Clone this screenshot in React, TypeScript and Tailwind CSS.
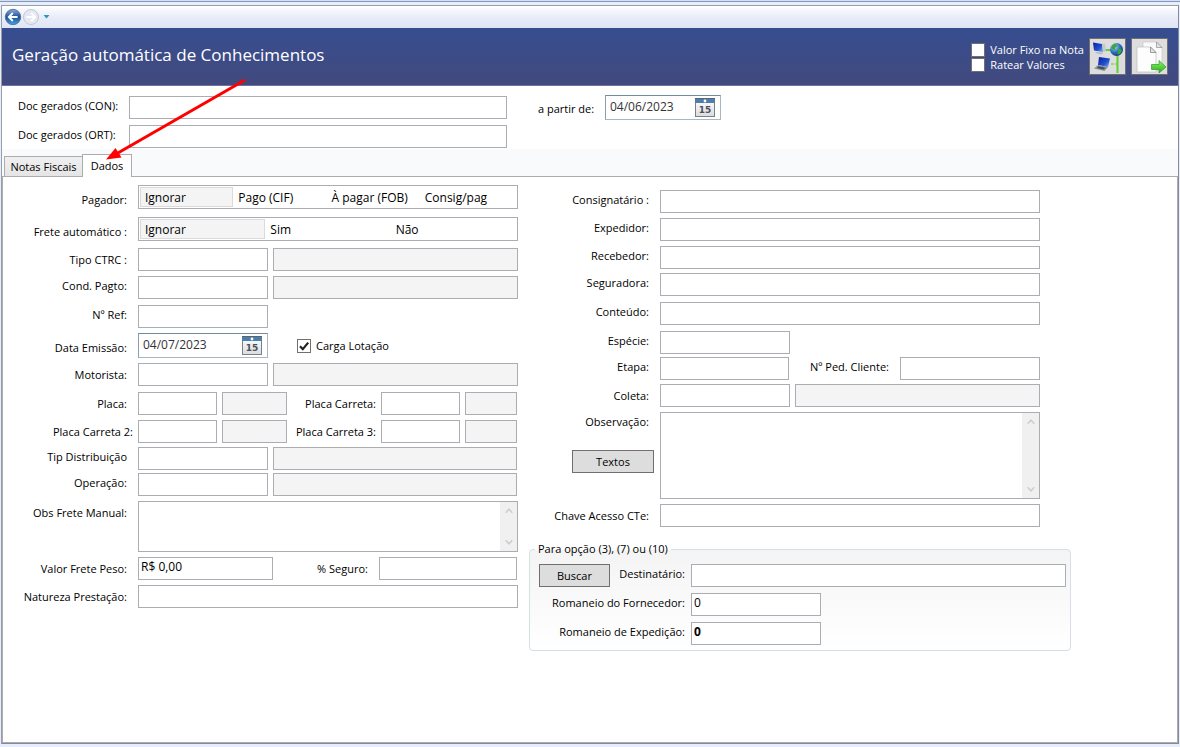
import { useId, type ReactNode } from 'react';
import { clsx } from 'clsx';

const FIELD = 'h-[23px] border border-[#abadb3] px-[2px] pb-[4px] text-xs leading-4 text-black outline-none';

interface FieldProps {
  id?: string;
  label?: string;
  className?: string;
  value?: string;
  readOnly?: boolean;
}

const Field = ({ id, label, className, value, readOnly }: FieldProps) => (
  <input
    id={id}
    type="text"
    aria-label={label}
    defaultValue={value}
    readOnly={readOnly}
    className={clsx(FIELD, readOnly ? 'bg-[#f4f4f4]' : 'bg-white', className)}
  />
);

interface RowProps {
  label: string;
  htmlFor?: string;
  className?: string;
  labelClass?: string;
  children: ReactNode;
}

/* Left column row: label right aligned against the fields */
const Row = ({ label, htmlFor, className, labelClass = 'pt-1', children }: RowProps) => (
  <div className={clsx('flex items-start', className)}>
    <label
      htmlFor={htmlFor}
      className={clsx('mr-[11px] w-[124px] shrink-0 whitespace-nowrap text-right', labelClass)}
    >
      {label}
    </label>
    <div className="flex min-w-0 flex-1 items-start gap-[5px]">{children}</div>
  </div>
);

/* Right column row */
const SideRow = ({ label, htmlFor, className, labelClass = 'pt-0.5', children }: RowProps) => (
  <div className={clsx('flex items-start pr-[31px]', className)}>
    <label
      htmlFor={htmlFor}
      className={clsx('mr-[11px] w-[120px] shrink-0 whitespace-nowrap text-right', labelClass)}
    >
      {label}
    </label>
    <div className="flex min-w-0 flex-1 items-start gap-[5px]">{children}</div>
  </div>
);

interface SegmentedProps {
  label: string;
  options: string[];
  className: string;
}

const Segmented = ({ label, options, className }: SegmentedProps) => {
  const name = useId();
  return (
    <div
      role="radiogroup"
      aria-label={label}
      className={clsx('grid h-6 flex-1 border border-[#abadb3] bg-white p-px text-xs leading-4', className)}
    >
      {options.map((option, i) => (
        <label
          key={option}
          className="flex items-center whitespace-nowrap border border-transparent px-1 pt-0.5 has-checked:border-[#dadada] has-checked:bg-[#f4f4f4]"
        >
          <input type="radio" name={name} defaultChecked={i === 0} className="sr-only" />
          {option}
        </label>
      ))}
    </div>
  );
};

const CalendarIcon = () => (
  <svg width="20" height="19" viewBox="0 0 20 19">
    <defs>
      <linearGradient id="cal" x1="0" y1="0" x2="0" y2="1">
        <stop offset="0" stopColor="#ffffff" />
        <stop offset="1" stopColor="#d9dce0" />
      </linearGradient>
    </defs>
    <rect x="0.5" y="0.5" width="19" height="18" fill="url(#cal)" stroke="#7b7f86" />
    <rect x="0" y="0" width="20" height="5" fill="#4a7fae" />
    <rect x="0" y="0" width="20" height="1" fill="#5c646e" />
    <circle cx="10" cy="3" r="1.4" fill="#fff" />
    <text
      x="10"
      y="15"
      textAnchor="middle"
      fontFamily="DejaVu Sans, sans-serif"
      fontSize="9"
      fontWeight="bold"
      fill="#4d5056"
    >
      15
    </text>
  </svg>
);

const DateField = ({ id, value, className }: { id: string; value: string; className: string }) => (
  <div
    className={clsx(
      'flex h-[25px] items-center border border-[#a9b7c2] border-t-[#6f8ba0] border-l-[#8b9fae] bg-white pr-[5px]',
      className,
    )}
  >
    <input
      id={id}
      type="text"
      defaultValue={value}
      className="w-0 min-w-0 flex-1 pb-0.5 pl-1 text-xs leading-4 text-[#333] outline-none"
    />
    <button type="button" aria-label="Abrir calendário">
      <CalendarIcon />
    </button>
  </div>
);

const Check = ({ label, checked, className }: { label: string; checked?: boolean; className?: string }) => (
  <label className={clsx('flex items-center gap-[5px] whitespace-nowrap', className)}>
    <span className="grid">
      <input
        type="checkbox"
        defaultChecked={checked}
        className="peer col-start-1 row-start-1 size-[14px] appearance-none border border-[#707070] bg-white"
      />
      <svg
        viewBox="0 0 14 14"
        className="pointer-events-none invisible col-start-1 row-start-1 size-[14px] peer-checked:visible"
      >
        <path d="M3 7.2 L5.8 10.2 L11.2 3.6" fill="none" stroke="#212121" strokeWidth="2.2" />
      </svg>
    </span>
    {label}
  </label>
);

const TextArea = ({ id, className }: { id: string; className: string }) => (
  <div className={clsx('flex flex-1 border border-[#abadb3] bg-white', className)}>
    <textarea id={id} className="min-w-0 flex-1 resize-none p-[2px] text-xs outline-none" />
    <div aria-hidden="true" className="flex w-[17px] flex-col items-center justify-between bg-[#f0f0f0] py-[5px]">
      <svg width="8" height="8" viewBox="0 0 8 8">
        <path d="M0.7 5.8 L4 2.2 L7.3 5.8" fill="none" stroke="#cdcdcd" strokeWidth="1.5" />
      </svg>
      <svg width="8" height="8" viewBox="0 0 8 8">
        <path d="M0.7 2.2 L4 5.8 L7.3 2.2" fill="none" stroke="#cdcdcd" strokeWidth="1.5" />
      </svg>
    </div>
  </div>
);

const PushButton = ({ children, className }: { children: ReactNode; className: string }) => (
  <button type="button" className={clsx('h-[23px] shrink-0 border border-[#707070] bg-[#dddddd]', className)}>
    {children}
  </button>
);

const NavBar = () => (
  <nav className="flex h-[22px] items-center bg-linear-to-b from-white from-0% via-[#e9edf8] via-50% to-[#e0e5f5] pl-[2px]">
    <button type="button" aria-label="Voltar">
      <svg width="18" height="18" viewBox="0 0 18 18">
        <defs>
          <linearGradient id="back" x1="0" y1="0" x2="0" y2="1">
            <stop offset="0" stopColor="#8fabd8" />
            <stop offset="0.5" stopColor="#1d4f9e" />
            <stop offset="1" stopColor="#3fa4e4" />
          </linearGradient>
        </defs>
        <circle cx="9" cy="9" r="7.7" fill="url(#back)" stroke="#4a6690" strokeWidth="0.8" />
        <path d="M13.6 9 H5.5 M8.8 5 L4.9 9 L8.8 13" fill="none" stroke="#fff" strokeWidth="2" />
      </svg>
    </button>
    <button type="button" aria-label="Avançar">
      <svg width="18" height="18" viewBox="0 0 18 18">
        <circle cx="9" cy="9" r="7.5" fill="#e4e8f2" stroke="#c3c8d6" />
        <path d="M4.4 9 H12.5 M9.2 5 L13.1 9 L9.2 13" fill="none" stroke="#fff" strokeWidth="2" />
      </svg>
    </button>
    <button type="button" aria-label="Histórico" className="ml-[3px]">
      <svg width="7" height="4" viewBox="0 0 7 4">
        <path d="M0.5 0 H6.5 L3.5 3.4 Z" fill="#2b95c4" />
      </svg>
    </button>
  </nav>
);

const NetworkIcon = () => (
  <svg width="34" height="34" viewBox="0 0 34 34">
    <defs>
      <radialGradient id="globe" cx="0.35" cy="0.3" r="0.8">
        <stop offset="0" stopColor="#b8dcf5" />
        <stop offset="0.5" stopColor="#2f74c0" />
        <stop offset="1" stopColor="#0c2f6c" />
      </radialGradient>
      <linearGradient id="screen" x1="0" y1="0" x2="1" y2="1">
        <stop offset="0" stopColor="#0a1c9c" />
        <stop offset="0.6" stopColor="#2150cf" />
        <stop offset="1" stopColor="#7fb0f2" />
      </linearGradient>
    </defs>
    <path d="M14 10 H22 M26.5 15 V33" fill="none" stroke="#5fd02c" strokeWidth="2" />
    <path d="M20 24 H26" fill="none" stroke="#5fd02c" strokeWidth="1.2" strokeDasharray="3 1" />
    <path d="M2 2.500 L11 4 L12 12 L3 10.500 Z" fill="url(#screen)" />
    <path d="M11 4 L14 3.500 L15 11.500 L12 12 Z" fill="#c3c7cf" />
    <path d="M4 12 L12 12.500 L11 14.500 L6 13.500 Z" fill="#b5bac4" />
    <circle cx="25.500" cy="9.500" r="6.500" fill="url(#globe)" />
    <path d="M21.500 5 Q25 2.500 26.500 6 Q23.500 7 24 10 Q20.500 10 20.500 7 Z M27 9 Q31.500 7.500 30.500 12 Q28.500 15 26.500 14.500 Z" fill="#3aa545" />
    <path d="M8 17 L19 18.500 L17 27 L7 25 Z" fill="url(#screen)" />
    <path d="M7 25 L17 27 L13.500 31 L3 28.500 Z" fill="#8a909c" />
    <path d="M7.500 26.300 L14.500 27.700 L12.500 29.500 L6 28 Z" fill="#454b58" />
  </svg>
);

const CopyIcon = () => (
  <svg width="34" height="34" viewBox="0 0 34 34">
    <defs>
      <linearGradient id="go" x1="0" y1="0" x2="0" y2="1">
        <stop offset="0" stopColor="#8bf068" />
        <stop offset="1" stopColor="#25b31c" />
      </linearGradient>
    </defs>
    <path d="M10 2 H23.500 L29 7.500 V28 H10 Z" fill="#fafafa" stroke="#c9c9c9" strokeWidth="0.7" />
    <path d="M23.500 2 V7.500 H29 Z" fill="#e4e4e4" stroke="#8c8c8c" strokeWidth="0.7" />
    <path d="M4 7 H17.500 L23 12.500 V32 H4 Z" fill="#fdfdfd" stroke="#bdbdbd" strokeWidth="0.7" />
    <path d="M17.500 7 V12.500 H23 Z" fill="#e4e4e4" stroke="#777" strokeWidth="0.7" />
    <path d="M18.500 24.500 H26 V20.500 L33 27 L26 33 V29.500 H18.500 Z" fill="url(#go)" stroke="#2f9c24" strokeWidth="0.7" />
  </svg>
);

const Header = () => (
  <header className="flex h-[58px] items-center justify-between border-b border-[#6b73a0] bg-linear-to-b from-[#364d90] to-[#424a7e] pr-[10px] pl-[10px] text-white">
    <h1 className="pb-1 text-[17px] leading-6">Geração automática de Conhecimentos</h1>
    <div className="flex items-center">
      <div className="flex flex-col pt-0.5">
        <Check label="Valor Fixo na Nota" className="h-[15px]" />
        <Check label="Ratear Valores" className="h-[15px]" />
      </div>
      <button type="button" aria-label="Rede" className="ml-[5px] size-[37px] border border-[#707070] bg-[#dddddd] pl-px">
        <NetworkIcon />
      </button>
      <button type="button" aria-label="Gerar" className="ml-[5px] size-[37px] border border-[#707070] bg-[#dddddd] pl-px">
        <CopyIcon />
      </button>
    </div>
  </header>
);

const DocsBar = () => (
  <section className="flex h-[63px] items-start bg-white pl-4">
    <div className="flex w-[489px] flex-col gap-1.5 pt-[10px]">
      <div className="flex items-start">
        <label htmlFor="doc-con" className="w-[111px] whitespace-nowrap pt-0.5">Doc gerados (CON):</label>
        <Field id="doc-con" className="min-w-0 flex-1" />
      </div>
      <div className="flex items-start">
        <label htmlFor="doc-ort" className="w-[111px] whitespace-nowrap pt-0.5">Doc gerados (ORT):</label>
        <Field id="doc-ort" className="min-w-0 flex-1" />
      </div>
    </div>
    <div className="flex items-start pt-[9px] pl-[31px]">
      <label htmlFor="a-partir" className="w-[67px] whitespace-nowrap pt-1.5">a partir de:</label>
      <DateField id="a-partir" value="04/06/2023" className="w-[116px]" />
    </div>
  </section>
);

const Tabs = () => (
  <div role="tablist" className="flex h-[27px] items-end bg-[#f9fafc] pl-[2px]">
    <button
      type="button"
      role="tab"
      aria-selected="false"
      className="h-5 w-[78px] whitespace-nowrap border border-r-0 border-b-0 border-[#acacac] bg-linear-to-b from-[#f0f0f0] to-[#e5e5e5]"
    >
      Notas Fiscais
    </button>
    <button
      type="button"
      role="tab"
      aria-selected="true"
      className="z-10 -mb-px h-[23px] w-[50px] border border-b-0 border-[#acacac] bg-white"
    >
      Dados
    </button>
  </div>
);

const LeftColumn = () => (
  <div className="min-w-0 pt-2">
    <Row label="Pagador:" labelClass="pt-[7px]">
      <Segmented
        label="Pagador"
        options={['Ignorar', 'Pago (CIF)', 'À pagar (FOB)', 'Consig/pag']}
        className="grid-cols-4 pr-1"
      />
    </Row>
    <Row label="Frete automático :" labelClass="pt-[7px]" className="mt-2">
      <Segmented label="Frete automático" options={['Ignorar', 'Sim', 'Não']} className="grid-cols-3" />
    </Row>
    <Row label="Tipo CTRC :" htmlFor="tipo" className="mt-[7px]">
      <Field id="tipo" className="w-[130px]" />
      <Field label="Descrição do tipo" readOnly className="min-w-0 flex-1" />
    </Row>
    <Row label="Cond. Pagto:" htmlFor="cond" labelClass="pt-0.5" className="mt-[5px]">
      <Field id="cond" className="w-[130px]" />
      <Field label="Descrição da condição" readOnly className="min-w-0 flex-1" />
    </Row>
    <Row label="Nº Ref:" htmlFor="ref" labelClass="pt-0.5" className="mt-1.5">
      <Field id="ref" className="w-[130px]" />
    </Row>
    <Row label="Data Emissão:" htmlFor="emissao" labelClass="pt-[7px]" className="mt-[5px]">
      <DateField id="emissao" value="04/07/2023" className="w-[130px]" />
      <Check label="Carga Lotação" checked className="h-[25px] pl-6" />
    </Row>
    <Row label="Motorista:" htmlFor="motorista" className="mt-[5px]">
      <Field id="motorista" className="w-[130px]" />
      <Field label="Nome do motorista" readOnly className="min-w-0 flex-1" />
    </Row>
    <Row label="Placa:" htmlFor="placa" className="mt-1.5 pr-px">
      <Field id="placa" className="w-[79px]" />
      <Field label="UF da placa" readOnly className="w-[65px]" />
      <label htmlFor="carreta" className="flex-1 whitespace-nowrap pt-1 text-right">Placa Carreta:</label>
      <Field id="carreta" className="w-[79px]" />
      <Field label="UF da carreta" readOnly className="w-[52px]" />
    </Row>
    <div className="mt-[5px] flex items-start pr-px">
      <label htmlFor="carreta2" className="mr-[5px] w-[130px] shrink-0 whitespace-nowrap pt-1 text-right">
        Placa Carreta 2:
      </label>
      <div className="flex min-w-0 flex-1 items-start gap-[5px]">
        <Field id="carreta2" className="w-[79px]" />
        <Field label="UF da carreta 2" readOnly className="w-[65px]" />
        <label htmlFor="carreta3" className="flex-1 whitespace-nowrap pt-1 text-right">Placa Carreta 3:</label>
        <Field id="carreta3" className="w-[79px]" />
        <Field label="UF da carreta 3" readOnly className="w-[52px]" />
      </div>
    </div>
    <Row label="Tip Distribuição" htmlFor="distribuicao" labelClass="pt-0.5" className="mt-1 pr-px">
      <Field id="distribuicao" className="w-[130px]" />
      <Field label="Descrição da distribuição" readOnly className="min-w-0 flex-1" />
    </Row>
    <Row label="Operação:" htmlFor="operacao" labelClass="pt-0.5" className="mt-[3px] pr-px">
      <Field id="operacao" className="w-[130px]" />
      <Field label="Descrição da operação" readOnly className="min-w-0 flex-1" />
    </Row>
    <Row label="Obs Frete Manual:" htmlFor="obs-frete" className="mt-[5px]">
      <TextArea id="obs-frete" className="h-[51px]" />
    </Row>
    <Row label="Valor Frete Peso:" htmlFor="valor-frete" className="mt-[5px] pr-px">
      <Field id="valor-frete" value="R$ 0,00" className="w-[135px]" />
      <label htmlFor="seguro" className="flex-1 whitespace-nowrap pt-1 pr-1.5 text-right">% Seguro:</label>
      <Field id="seguro" className="w-[138px]" />
    </Row>
    <Row label="Natureza Prestação:" htmlFor="natureza" className="mt-[5px]">
      <Field id="natureza" className="min-w-0 flex-1" />
    </Row>
  </div>
);

const RomaneioGroup = () => (
  <fieldset className="mt-[14px] rounded-[4px] border border-[#d5dfe5] bg-linear-to-b from-[#f4f4f4] to-white pr-1 pb-[5px] pl-[9px]">
    <legend className="-ml-1 h-4 whitespace-nowrap px-[3px] leading-4">Para opção (3), (7) ou (10)</legend>
    <div className="mt-[7px] flex items-start">
      <PushButton className="w-[71px]">Buscar</PushButton>
      <label htmlFor="destinatario" className="mr-1.5 w-[75px] shrink-0 whitespace-nowrap pt-0.5 text-right">
        Destinatário:
      </label>
      <Field id="destinatario" className="min-w-0 flex-1" />
    </div>
    <div className="mt-1.5 flex items-start">
      <label htmlFor="fornecedor" className="mr-1.5 w-[146px] shrink-0 whitespace-nowrap pt-0.5 text-right">
        Romaneio do Fornecedor:
      </label>
      <Field id="fornecedor" value="0" className="w-[130px]" />
    </div>
    <div className="mt-1.5 flex items-start">
      <label htmlFor="expedicao" className="mr-1.5 w-[146px] shrink-0 whitespace-nowrap pt-0.5 text-right">
        Romaneio de Expedição:
      </label>
      <Field id="expedicao" value="0" className="w-[130px] font-bold" />
    </div>
  </fieldset>
);

const RightColumn = () => (
  <div className="min-w-0 pt-[13px]">
    <SideRow label="Consignatário :" htmlFor="consignatario">
      <Field id="consignatario" className="min-w-0 flex-1" />
    </SideRow>
    <SideRow label="Expedidor:" htmlFor="expedidor" className="mt-[5px]">
      <Field id="expedidor" className="min-w-0 flex-1" />
    </SideRow>
    <SideRow label="Recebedor:" htmlFor="recebedor" className="mt-[5px]">
      <Field id="recebedor" className="min-w-0 flex-1" />
    </SideRow>
    <SideRow label="Seguradora:" htmlFor="seguradora" className="mt-1">
      <Field id="seguradora" className="min-w-0 flex-1" />
    </SideRow>
    <SideRow label="Conteúdo:" htmlFor="conteudo" className="mt-1.5">
      <Field id="conteudo" className="min-w-0 flex-1" />
    </SideRow>
    <SideRow label="Espécie:" htmlFor="especie" className="mt-1.5">
      <Field id="especie" className="w-[130px]" />
    </SideRow>
    <SideRow label="Etapa:" htmlFor="etapa" className="mt-[3px]">
      <Field id="etapa" className="w-[129px]" />
      <label htmlFor="ped-cliente" className="flex-1 whitespace-nowrap pt-0.5 pr-1.5 text-right">Nº Ped. Cliente:</label>
      <Field id="ped-cliente" className="w-[140px]" />
    </SideRow>
    <SideRow label="Coleta:" htmlFor="coleta" labelClass="pt-1" className="mt-1">
      <Field id="coleta" className="w-[130px]" />
      <Field label="Descrição da coleta" readOnly className="min-w-0 flex-1" />
    </SideRow>
    <div className="mt-[5px] flex items-start pr-[31px]">
      <div className="mr-1.5 flex w-[125px] shrink-0 flex-col items-end">
        <label htmlFor="observacao" className="pt-0.5 pr-[5px]">Observação:</label>
        <PushButton className="mt-5 w-[82px]">Textos</PushButton>
      </div>
      <TextArea id="observacao" className="h-[87px]" />
    </div>
    <SideRow label="Chave Acesso CTe:" htmlFor="chave" labelClass="pt-1" className="mt-[5px]">
      <Field id="chave" className="min-w-0 flex-1" />
    </SideRow>
    <RomaneioGroup />
  </div>
);

/* Red annotation arrow pointing at the "Dados" tab */
const Arrow = () => (
  <svg
    aria-hidden="true"
    width="150"
    height="90"
    viewBox="0 0 150 90"
    className="pointer-events-none absolute top-[75px] left-[100px] z-20"
  >
    <path d="M145 5 L17 78.500" stroke="#ff0000" strokeWidth="3" />
    <path d="M6 84.500 L15.500 73 L21.500 82.500 Z" fill="#ff0000" />
  </svg>
);

export default function App() {
  return (
    <div className="relative flex min-h-screen flex-col bg-[#e6edfc] px-px pb-[3px] font-['Open_Sans','Noto_Sans',sans-serif] text-[11px] leading-4 text-black">
      <div className="-mx-px mb-[3px] h-[2px] border-b border-[#8797b5] bg-[#cfe0fa]" />
      <main className="flex flex-1 flex-col border border-[#9a9da6] border-r-[#858a9b] border-b-[#858a9b] bg-white">
        <NavBar />
        <Header />
        <DocsBar />
        <Tabs />
        <form className="grid flex-1 grid-cols-[515fr_542fr] items-start gap-[11px] border border-[#acacac] bg-white pr-[106px]">
          <LeftColumn />
          <RightColumn />
        </form>
      </main>
      <Arrow />
    </div>
  );
}
